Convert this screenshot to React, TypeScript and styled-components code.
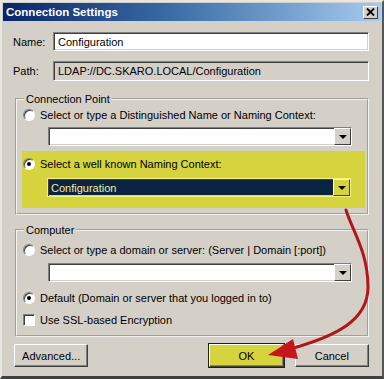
import React from 'react';
import styled, { createGlobalStyle } from 'styled-components';

const Global = createGlobalStyle`
  html, body { margin: 0; padding: 0; background: #d4d0c8; }
  body { font-family: "Liberation Sans", Arial, sans-serif; font-size: 11px; color: #000; }
`;

const Window = styled.div`
  position: relative;
  width: 384px;
  height: 379px;
  box-sizing: border-box;
  background: #d4d0c8;
  border-top: 2px solid #e8e6e0;
  border-left: 2px solid #e8e6e0;
  border-right: 2px solid #555;
  border-bottom: 3px solid #404040;
  padding: 1px 1px 0 1px;
  display: flex;
  flex-direction: column;
  overflow: hidden;
`;

const TitleBar = styled.div`
  height: 18px;
  background: linear-gradient(to right, #0a246a 0%, #3a6ea5 45%, #a6caf0 100%);
  display: flex;
  align-items: center;
  justify-content: space-between;
  padding: 0 3px 0 3px;
  color: #fff;
  font-weight: bold;
  font-size: 11.5px;
`;

const CloseBtn = styled.div`
  width: 15px;
  height: 13px;
  box-sizing: border-box;
  background: #d4d0c8;
  border-top: 1px solid #fff;
  border-left: 1px solid #fff;
  border-right: 1px solid #404040;
  border-bottom: 1px solid #404040;
  display: flex;
  align-items: center;
  justify-content: center;
`;

const Body = styled.div`
  padding: 11px 12px 0 9px;
  display: flex;
  flex-direction: column;
`;

const FieldRow = styled.div<{ $mt?: number }>`
  display: flex;
  align-items: center;
  margin-top: ${p => p.$mt ?? 0}px;
`;

const Label = styled.span`
  width: 40px;
  padding-left: 1px;
`;

const sunken = `
  box-sizing: border-box;
  border-top: 1px solid #808080;
  border-left: 1px solid #808080;
  border-right: 1px solid #fff;
  border-bottom: 1px solid #fff;
  box-shadow: inset 1px 1px 0 #404040, inset -1px -1px 0 #d4d0c8;
`;

const TextBox = styled.div<{ $readOnly?: boolean }>`
  ${sunken}
  flex: 1;
  height: ${p => (p.$readOnly ? 20 : 19)}px;
  background: ${p => (p.$readOnly ? '#d4d0c8' : '#fff')};
  padding: 0 4px;
  display: flex;
  align-items: center;
`;

const Group = styled.fieldset<{ $mt: number; $h: number }>`
  margin: ${p => p.$mt}px 0 0 3px;
  width: 354px;
  height: ${p => p.$h}px;
  box-sizing: border-box;
  border: 2px groove #f4f2ee;
  padding: 0 6px 0 6px;
  position: relative;
  display: flex;
  flex-direction: column;
`;

const Legend = styled.legend`
  padding: 0 2px;
  margin-left: 1px;
  line-height: 12px;
`;

const Highlight = styled.div`
  background: #d6d43e;
  margin: 5px -4px 0 -1px;
  padding: 6px 0 11px 1px;
  display: flex;
  flex-direction: column;
`;

const OptionRow = styled.div<{ $mt?: number }>`
  display: flex;
  align-items: center;
  height: 14px;
  margin-top: ${p => p.$mt ?? 0}px;
  gap: 5px;
`;

const Radio = styled.span<{ $on?: boolean }>`
  width: 12px;
  height: 12px;
  box-sizing: border-box;
  border-radius: 50%;
  background: #fff;
  border: 1px solid;
  border-color: #808080 #fff #fff #808080;
  box-shadow: inset 1px 1px 0 #404040;
  display: flex;
  align-items: center;
  justify-content: center;
  &::after {
    content: '';
    width: 4px;
    height: 4px;
    border-radius: 50%;
    background: ${p => (p.$on ? '#000' : 'transparent')};
  }
`;

const Check = styled.span`
  width: 12px;
  height: 12px;
  box-sizing: border-box;
  background: #fff;
  border: 1px solid;
  border-color: #808080 #fff #fff #808080;
  box-shadow: inset 1px 1px 0 #404040;
`;

const Combo = styled.div<{ $selected?: boolean; $mt?: number; $ml?: number }>`
  ${sunken}
  margin: ${p => p.$mt ?? 5}px 0 0 ${p => p.$ml ?? 25}px;
  width: 304px;
  height: 19px;
  background: ${p => (p.$selected ? '#0b2443' : '#fff')};
  color: #f0ee9a;
  display: flex;
  align-items: stretch;
  ${p => (p.$selected ? 'outline: 1px solid #f4f07a; outline-offset: -1px;' : '')}
`;

const ComboText = styled.span`
  flex: 1;
  padding-left: 3px;
  display: flex;
  align-items: center;
`;

const DropBtn = styled.span<{ $selected?: boolean }>`
  width: 17px;
  box-sizing: border-box;
  background: ${p => (p.$selected ? '#d6d43e' : '#d4d0c8')};
  border-top: 1px solid #fff;
  border-left: 1px solid #fff;
  border-right: 1px solid #404040;
  border-bottom: 1px solid #404040;
  display: flex;
  align-items: center;
  justify-content: center;
  &::after {
    content: '';
    border-left: 4px solid transparent;
    border-right: 4px solid transparent;
    border-top: 4px solid #000;
  }
`;

const ButtonBar = styled.div`
  display: flex;
  margin-top: 7px;
  padding-left: 2px;
`;

const Button = styled.div<{ $yellow?: boolean; $ml?: number }>`
  width: 75px;
  height: 23px;
  box-sizing: border-box;
  margin-left: ${p => p.$ml ?? 0}px;
  background: ${p => (p.$yellow ? '#d6d43e' : '#d4d0c8')};
  border-top: 1px solid #fff;
  border-left: 1px solid #fff;
  border-right: 1px solid #404040;
  border-bottom: 1px solid #404040;
  box-shadow: inset -1px -1px 0 #808080${p => (p.$yellow ? ', 0 0 0 1px #202020' : '')};
  display: flex;
  align-items: center;
  justify-content: center;
`;

const ArrowLayer = styled.svg`
  position: absolute;
  left: 0;
  top: 0;
  pointer-events: none;
`;

export default function App() {
  return (
    <>
      <Global />
      <Window>
        <TitleBar>
          <span>Connection Settings</span>
          <CloseBtn>
            <svg width="9" height="8" viewBox="0 0 9 8">
              <path d="M1 0.5 L8 7.5 M8 0.5 L1 7.5" stroke="#000" strokeWidth="1.8" />
            </svg>
          </CloseBtn>
        </TitleBar>
        <Body>
          <FieldRow>
            <Label>Name:</Label>
            <TextBox>Configuration</TextBox>
          </FieldRow>
          <FieldRow $mt={10}>
            <Label>Path:</Label>
            <TextBox $readOnly>LDAP://DC.SKARO.LOCAL/Configuration</TextBox>
          </FieldRow>

          <Group $mt={12} $h={122}>
            <Legend>Connection Point</Legend>
            <OptionRow $mt={3}>
              <Radio />
              <span>Select or type a Distinguished Name or Naming Context:</span>
            </OptionRow>
            <Combo>
              <ComboText />
              <DropBtn />
            </Combo>
            <Highlight>
              <OptionRow>
                <Radio $on />
                <span>Select a well known Naming Context:</span>
              </OptionRow>
              <Combo $selected $mt={7} $ml={24}>
                <ComboText>Configuration</ComboText>
                <DropBtn $selected />
              </Combo>
            </Highlight>
          </Group>

          <Group $mt={9} $h={113}>
            <Legend>Computer</Legend>
            <OptionRow $mt={7}>
              <Radio />
              <span>Select or type a domain or server: (Server | Domain [:port])</span>
            </OptionRow>
            <Combo $mt={6}>
              <ComboText />
              <DropBtn />
            </Combo>
            <OptionRow $mt={9}>
              <Radio $on />
              <span>Default (Domain or server that you logged in to)</span>
            </OptionRow>
            <OptionRow $mt={8}>
              <Check />
              <span>Use SSL-based Encryption</span>
            </OptionRow>
          </Group>

          <ButtonBar>
            <Button>Advanced...</Button>
            <Button $yellow $ml={121}>OK</Button>
            <Button $ml={11}>Cancel</Button>
          </ButtonBar>
        </Body>
        <ArrowLayer width="384" height="379" viewBox="0 0 384 379">
          <path
            d="M344 208 C350 228, 366 250, 366 285 C366 318, 335 334, 288 347"
            fill="none"
            stroke="#b3161a"
            strokeWidth="3"
            strokeLinecap="round"
          />
          <polygon points="266,353 291,337 296,357" fill="#c8151b" />
        </ArrowLayer>
      </Window>
    </>
  );
}
